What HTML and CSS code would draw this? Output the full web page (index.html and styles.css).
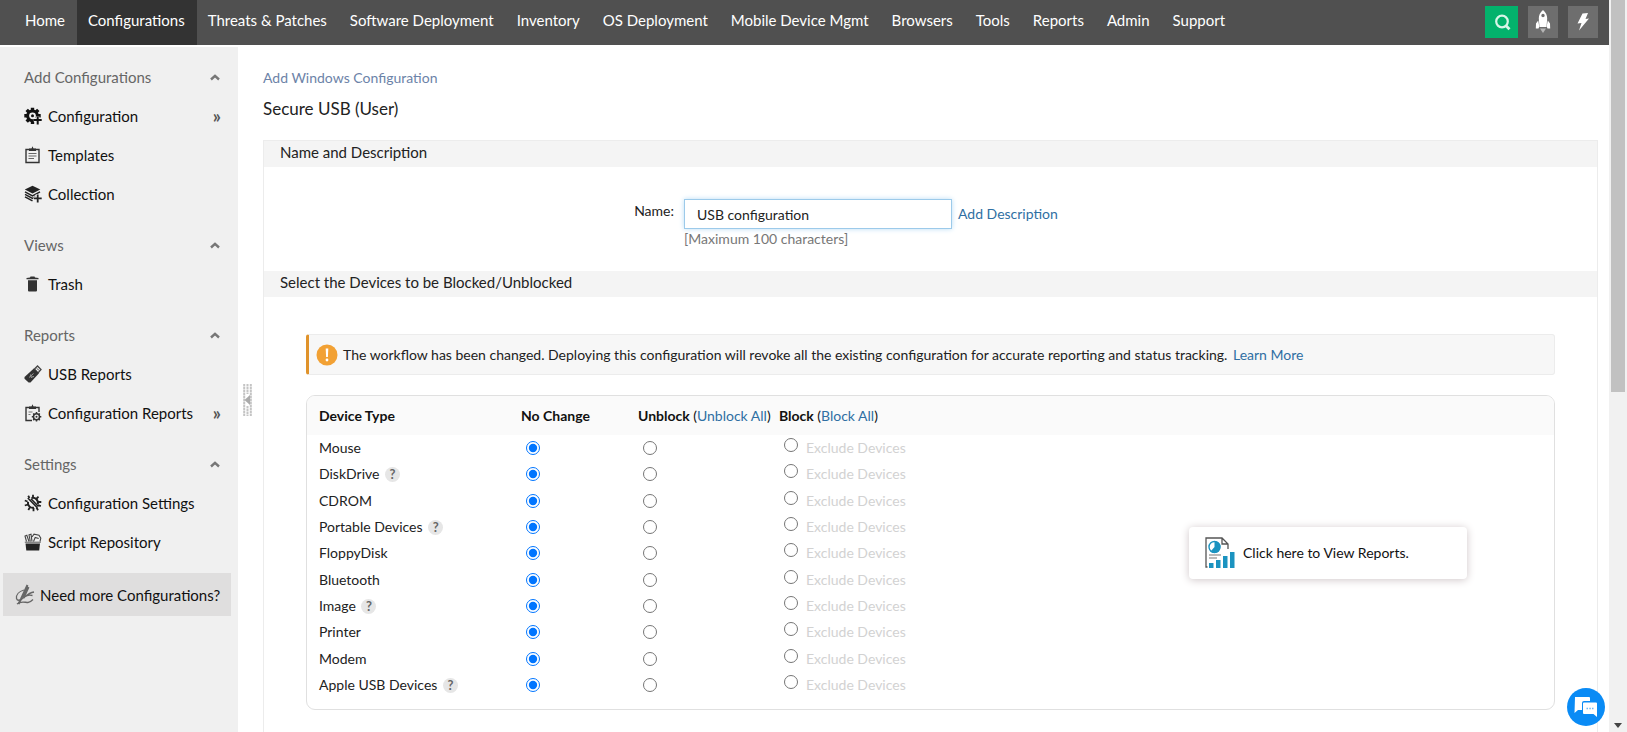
FILE: index.html
```html
<!DOCTYPE html>
<html lang="en">
<head>
    <meta charset="UTF-8">
    <meta name="viewport" content="width=device-width, initial-scale=1.0">
    <title>Secure USB (User)</title>
    <link rel="stylesheet" href="styles.css">
</head>

<body>
<div class="page">
    <header class="topbar">
        <nav class="main-nav">
            <a href="#">Home</a>
            <a href="#" class="active">Configurations</a>
            <a href="#">Threats &amp; Patches</a>
            <a href="#">Software Deployment</a>
            <a href="#">Inventory</a>
            <a href="#">OS Deployment</a>
            <a href="#">Mobile Device Mgmt</a>
            <a href="#">Browsers</a>
            <a href="#">Tools</a>
            <a href="#">Reports</a>
            <a href="#">Admin</a>
            <a href="#">Support</a>
        </nav>
        <div class="tools">
            <button class="tool tool-search" aria-label="Search">
                <svg width="18" height="18" viewBox="0 0 18 18"><circle cx="9" cy="8.500" r="5.800" fill="none" stroke="#d9f5e8" stroke-width="2.200"/><path d="M12.800 12.500l3.700 3.700" stroke="#d9f5e8" stroke-width="2.800"/></svg>
            </button>
            <button class="tool" aria-label="Quick launch">
                <svg width="16" height="24" viewBox="0 0 16 24" fill="#fff"><path fill-rule="evenodd" d="M8 0c3 2.400 4.200 5.500 4.200 8.500L11.500 17h-7L3.800 8.500C3.800 5.500 5 2.400 8 0zM8 3.800a1.700 1.700 0 1 0 0 3.400 1.700 1.700 0 0 0 0-3.400z"/><path d="M3.200 10.500L1 13.500.8 18.500h2.700l.8-2zM12.800 10.500l2.200 3 .2 5h-2.700l-.8-2z"/><path d="M5 18.500h6l-1.300 2L8 23l-1.700-2.500z" fill="#b5b5b5"/></svg>
            </button>
            <button class="tool" aria-label="Quick actions">
                <svg width="14" height="20" viewBox="0 0 14 20"><path d="M6.500 1.500l5.500-.5-2.500 6 3.500-.5L3 18.500l2.500-7.500-4 .5z" fill="#fff"/></svg>
            </button>
        </div>
    </header>

    <div class="body">
        <aside class="sidebar">
            <section class="menu-group">
                <h2>Add Configurations <svg class="caret" width="12" height="8" viewBox="0 0 12 8"><path d="M2 6.500L6 2.800l4 3.700"/></svg></h2>
                <a href="#">
                    <svg width="18" height="18" viewBox="0 0 18 18"><circle cx="8.500" cy="8.800" r="4.900" fill="none" stroke="#111" stroke-width="3"/><g stroke="#111" stroke-width="3.400"><path d="M8.500 3.500V.8M4.800 5L2.700 2.900M3.500 8.800H.3M4.800 12.500l-2.100 2.100M8.500 14v3M12.200 5l2.100-2.100M13.500 8.800h3.200"/></g><circle cx="8.500" cy="8.800" r="1.500" fill="#111"/><path d="M9.800 13h8M13.500 9.500v8.500" stroke="#f0f0f0" stroke-width="3.800"/><path d="M10 13h7.700M13.700 9.500v8" stroke="#111" stroke-width="2"/></svg>
                    <span>Configuration</span>
                    <i class="more">»</i>
                </a>
                <a href="#">
                    <svg width="18" height="18" viewBox="0 0 18 18"><path d="M2 3.500h13v13H2z" fill="none" stroke="#333" stroke-width="1.400"/><path d="M5 2.500h2.500L8.500.3l1 2.200H12V5H5z" fill="#333"/><path d="M4.500 7.500h8M4.500 10h8M4.500 12.500h5.500" stroke="#666" stroke-width="1"/></svg>
                    <span>Templates</span>
                </a>
                <a href="#">
                    <svg width="18" height="18" viewBox="0 0 18 18"><path d="M8.500.8l7.800 3.800-7.800 4L.8 4.600z" fill="#222"/><path d="M1 6.800l7.500 4L16 6.800M1 9.300l7.500 4 3-1.600M1 11.800l7.500 4" fill="none" stroke="#222" stroke-width="1.500"/><path d="M9.500 13.300h8M13.500 9.300v8" stroke="#f0f0f0" stroke-width="3.600"/><path d="M10 13.300h7.700M13.700 9.600v8" stroke="#222" stroke-width="1.800"/></svg>
                    <span>Collection</span>
                </a>
            </section>

            <section class="menu-group">
                <h2>Views <svg class="caret" width="12" height="8" viewBox="0 0 12 8"><path d="M2 6.500L6 2.800l4 3.700"/></svg></h2>
                <a href="#">
                    <svg width="18" height="18" viewBox="0 0 18 18" fill="#333"><path d="M4 5.200h9v10.300a1 1 0 0 1-1 1H5a1 1 0 0 1-1-1zM2.500 3L6 2.500l.5-1h4l.5 1 3.500.5v1.200h-12z"/></svg>
                    <span>Trash</span>
                </a>
            </section>

            <section class="menu-group">
                <h2>Reports <svg class="caret" width="12" height="8" viewBox="0 0 12 8"><path d="M2 6.500L6 2.800l4 3.700"/></svg></h2>
                <a href="#">
                    <svg width="18" height="18" viewBox="0 0 18 18"><path d="M10.500 4l3-3L17 4.500l-3 3.500z" fill="#f0f0f0" stroke="#444" stroke-width="1.300"/><path d="M12.800 3.300l2.200 2.200" stroke="#444"/><path d="M.5 12L9.800 3.500l5 5L6.500 17.500H4.600L.5 13.700z" fill="#333"/><path d="M5 12.500l4.500-4M6.500 9.500l1 3.500M8 12l2-.5" fill="none" stroke="#aaa" stroke-width=".9"/></svg>
                    <span>USB Reports</span>
                </a>
                <a href="#">
                    <svg width="18" height="18" viewBox="0 0 18 18"><path d="M8 16.500H2v-13h13V8" fill="none" stroke="#333" stroke-width="1.400"/><path d="M5 2.500h2.500L8.500.3l1 2.200H12V5H5z" fill="#333"/><path d="M4.500 8h4M4.500 10.500h2" stroke="#777"/><circle cx="12.500" cy="12.800" r="3" fill="none" stroke="#333" stroke-width="1.500"/><circle cx="12.500" cy="12.800" r="1" fill="#333"/><path d="M12.500 8v1.800M12.500 15.800v1.800M7.800 12.800h1.700M15.500 12.800h1.800M9.200 9.500l1.200 1.200M14.600 14.900l1.200 1.200M15.800 9.500l-1.200 1.200M9.200 16.100l1.200-1.200" stroke="#333" stroke-width="1.500"/></svg>
                    <span>Configuration Reports</span>
                    <i class="more">»</i>
                </a>
            </section>

            <section class="menu-group">
                <h2>Settings <svg class="caret" width="12" height="8" viewBox="0 0 12 8"><path d="M2 6.500L6 2.800l4 3.700"/></svg></h2>
                <a href="#">
                    <svg width="18" height="18" viewBox="0 0 18 18"><g fill="none" stroke="#222"><path d="M7.500 4a5 5 0 0 1 6.300 6M10 13.700a5 5 0 0 1-6-6" stroke-width="2"/><path d="M9 4V.8M12.200 5l2.300-2.300M14 8h3.300M14 11l2.800 1.200M5.500 4L4.200 1.800M3.500 7.500L.8 6.500M4 10.500l-3.200 1M6 13.300l-1.700 2.700M9.500 14v3.200M12.500 13.500l1.500 2.700" stroke-width="1.800"/><path d="M3.800 4l9.500 9.700M7 4.800l7.500 7.700" stroke-width="1.500"/></g></svg>
                    <span>Configuration Settings</span>
                </a>
                <a href="#">
                    <svg width="18" height="18" viewBox="0 0 18 18"><path d="M1.500 10.500h14.500l-.8 7H2.300z" fill="#222"/><path d="M.8 9.200h16" stroke="#555"/><path d="M2.500 8.500L1 3l1.800-.8L5 8.500M6.300 8.500L5 1.800l2-.5 1 7M8 4L10 1.200l5 1 1.800 3-.8 3.300M9.500 8.500l1.700-4 3.500 1" fill="none" stroke="#444" stroke-width="1.100"/></svg>
                    <span>Script Repository</span>
                </a>
            </section>

            <a href="#" class="need-more">
                <svg width="20" height="22" viewBox="0 0 20 22" fill="none" stroke="#666"><path d="M12.500 1L6 15l-2.500 5M13.500 3L8.500 14" stroke-width="2"/><path d="M9 6C4 7.500 1 11 1.500 14.500c1 3 4 2 8-1.500 3-2.500 6-4.500 9.500-5M9.500 13c2-1.500 6-2 8-1.500M2 20c4-3.500 8-1.500 11-1.500 2 0 3.500-1.500 5-3" stroke-width="1.300"/></svg>
                <span>Need more Configurations?</span>
            </a>
        </aside>

        <div class="splitter">
            <button class="splitter-handle" aria-label="Collapse menu">
                <svg width="9" height="32" viewBox="0 0 9 32"><path d="M1.200 0v32M4.500 0v10M4.500 22v10M7.800 0v32" stroke="#c4c4c4" stroke-width="2" stroke-dasharray="2.500 .5"/><path d="M7 11v10L1.500 16z" fill="#aaa"/></svg>
            </button>
        </div>

        <main class="content">
            <a href="#" class="breadcrumb">Add Windows Configuration</a>
            <h1>Secure USB (User)</h1>

            <form class="panel">
                <h3>Name and Description</h3>
                <div class="name-row">
                    <label for="config-name">Name:</label>
                    <div class="name-field">
                        <div class="name-input">
                            <input type="text" id="config-name" value="USB configuration" maxlength="100">
                            <a href="#">Add Description</a>
                        </div>
                        <div class="hint">[Maximum 100 characters]</div>
                    </div>
                </div>

                <h3>Select the Devices to be Blocked/Unblocked</h3>
                <div class="devices">
                    <div class="alert">
                        <svg width="22" height="22" viewBox="0 0 22 22"><circle cx="11" cy="11" r="10.500" fill="#f2a134"/><path d="M9.700 4.500h2.600l-.4 8.500h-1.800z" fill="#fff"/><circle cx="11" cy="16" r="1.400" fill="#fff"/></svg>
                        <p>The workflow has been changed. Deploying this configuration will revoke all the existing configuration for accurate reporting and status tracking. <a href="#">Learn More</a></p>
                    </div>

                    <div class="device-box">
                        <table>
                            <thead>
                                <tr>
                                    <th class="col-type">Device Type</th>
                                    <th class="col-none">No Change</th>
                                    <th class="col-unblock">Unblock <span>(<a href="#">Unblock All</a>)</span></th>
                                    <th class="col-block">Block <span>(<a href="#">Block All</a>)</span></th>
                                    <th></th>
                                </tr>
                            </thead>
                            <tbody>
                                <tr>
                                    <td>Mouse</td>
                                    <td><input type="radio" name="mouse" aria-label="Mouse: no change" checked></td>
                                    <td><input type="radio" name="mouse" aria-label="Mouse: unblock"></td>
                                    <td><div class="block-cell"><input type="radio" name="mouse" aria-label="Mouse: block"><span>Exclude Devices</span></div></td>
                                    <td class="reports-cell" rowspan="10">
                                        <a href="#" class="reports-card">
                                            <svg width="30" height="32" viewBox="0 0 30 32"><path d="M2.500 30H1V1h16l6 6v5M17 1v6h6" fill="none" stroke="#555" stroke-width="1.300"/><circle cx="9.500" cy="10" r="5.500" fill="none" stroke="#1b93c0" stroke-width="1.400"/><path d="M9.500 4a6 6 0 1 1-4 10.500l4-4.500z" fill="#1b93c0"/><path d="M4 18h12M4 21h8" stroke="#777" stroke-width="1.200"/><path d="M4 26h4.500v5H4zM11 23h4.500v8H11zM18 19h4.500v12H18zM25 15h4.500v16H25z" fill="#1b93c0"/></svg>
                                            <span>Click here to View Reports.</span>
                                        </a>
                                    </td>
                                </tr>
                                <tr>
                                    <td>DiskDrive <b class="help">?</b></td>
                                    <td><input type="radio" name="diskdrive" aria-label="DiskDrive: no change" checked></td>
                                    <td><input type="radio" name="diskdrive" aria-label="DiskDrive: unblock"></td>
                                    <td><div class="block-cell"><input type="radio" name="diskdrive" aria-label="DiskDrive: block"><span>Exclude Devices</span></div></td>
                                </tr>
                                <tr>
                                    <td>CDROM</td>
                                    <td><input type="radio" name="cdrom" aria-label="CDROM: no change" checked></td>
                                    <td><input type="radio" name="cdrom" aria-label="CDROM: unblock"></td>
                                    <td><div class="block-cell"><input type="radio" name="cdrom" aria-label="CDROM: block"><span>Exclude Devices</span></div></td>
                                </tr>
                                <tr>
                                    <td>Portable Devices <b class="help">?</b></td>
                                    <td><input type="radio" name="portable" aria-label="Portable Devices: no change" checked></td>
                                    <td><input type="radio" name="portable" aria-label="Portable Devices: unblock"></td>
                                    <td><div class="block-cell"><input type="radio" name="portable" aria-label="Portable Devices: block"><span>Exclude Devices</span></div></td>
                                </tr>
                                <tr>
                                    <td>FloppyDisk</td>
                                    <td><input type="radio" name="floppy" aria-label="FloppyDisk: no change" checked></td>
                                    <td><input type="radio" name="floppy" aria-label="FloppyDisk: unblock"></td>
                                    <td><div class="block-cell"><input type="radio" name="floppy" aria-label="FloppyDisk: block"><span>Exclude Devices</span></div></td>
                                </tr>
                                <tr>
                                    <td>Bluetooth</td>
                                    <td><input type="radio" name="bluetooth" aria-label="Bluetooth: no change" checked></td>
                                    <td><input type="radio" name="bluetooth" aria-label="Bluetooth: unblock"></td>
                                    <td><div class="block-cell"><input type="radio" name="bluetooth" aria-label="Bluetooth: block"><span>Exclude Devices</span></div></td>
                                </tr>
                                <tr>
                                    <td>Image <b class="help">?</b></td>
                                    <td><input type="radio" name="image" aria-label="Image: no change" checked></td>
                                    <td><input type="radio" name="image" aria-label="Image: unblock"></td>
                                    <td><div class="block-cell"><input type="radio" name="image" aria-label="Image: block"><span>Exclude Devices</span></div></td>
                                </tr>
                                <tr>
                                    <td>Printer</td>
                                    <td><input type="radio" name="printer" aria-label="Printer: no change" checked></td>
                                    <td><input type="radio" name="printer" aria-label="Printer: unblock"></td>
                                    <td><div class="block-cell"><input type="radio" name="printer" aria-label="Printer: block"><span>Exclude Devices</span></div></td>
                                </tr>
                                <tr>
                                    <td>Modem</td>
                                    <td><input type="radio" name="modem" aria-label="Modem: no change" checked></td>
                                    <td><input type="radio" name="modem" aria-label="Modem: unblock"></td>
                                    <td><div class="block-cell"><input type="radio" name="modem" aria-label="Modem: block"><span>Exclude Devices</span></div></td>
                                </tr>
                                <tr>
                                    <td>Apple USB Devices <b class="help">?</b></td>
                                    <td><input type="radio" name="apple" aria-label="Apple USB Devices: no change" checked></td>
                                    <td><input type="radio" name="apple" aria-label="Apple USB Devices: unblock"></td>
                                    <td><div class="block-cell"><input type="radio" name="apple" aria-label="Apple USB Devices: block"><span>Exclude Devices</span></div></td>
                                </tr>
                            </tbody>
                        </table>
                    </div>
                </div>
            </form>
        </main>
    </div>

    <button class="chat" aria-label="Chat">
        <svg width="24" height="22" viewBox="0 0 24 22"><path d="M1 1h14a1 1 0 0 1 1 1v3H10a2 2 0 0 0-2 2v7H4l-3.500 3z" fill="#fff"/><path d="M10 6.500h12a1 1 0 0 1 1 1V21l-3.500-3H10a1 1 0 0 1-1-1V7.500a1 1 0 0 1 1-1z" fill="#fff"/><path d="M12.500 12.500H14M15.300 12.500h1.500M18 12.500h1.500" stroke="#6bb8f8" stroke-width="1.500"/></svg>
    </button>
</div>

<div class="scrollbar">
    <div class="thumb"></div>
    <svg width="8" height="5" viewBox="0 0 8 5"><path d="M0 0h8L4 5z" fill="#444"/></svg>
</div>
</body>
</html>
```
FILE: styles.css
```css
* {
    box-sizing: border-box;
}

body {
    display: flex;
    height: 100vh;
    margin: 0;
    overflow: hidden;
    font-family: Lato, sans-serif;
    font-size: 14px;
    line-height: 20px;
    color: #222;
    background: #fff;
}

a {
    color: #2f6fa3;
    text-decoration: none;
}

button {
    border: 0;
    padding: 0;
    cursor: pointer;
}

.page {
    position: relative;
    display: flex;
    flex-direction: column;
    flex: 1;
    min-width: 0;
}

/* top bar */
.topbar {
    display: flex;
    justify-content: space-between;
    flex: none;
    height: 45px;
    padding: 0 11px 0 14px;
    background: #505050;
}

.main-nav {
    display: flex;
}

.main-nav a {
    padding: 10px 12px 15px 11px;
    font-size: 15px;
    white-space: nowrap;
    color: #fff;
}

.main-nav .active {
    background: #333;
}

.tools {
    display: flex;
    gap: 10px;
    padding-top: 6px;
}

.tool {
    display: flex;
    align-items: center;
    justify-content: center;
    width: 30px;
    height: 32px;
    background: #6e6e6e;
}

.tool-search {
    width: 33px;
    background: #03b26c;
}

.body {
    display: flex;
    flex: 1;
    min-height: 0;
}

/* left menu */
.sidebar {
    flex: none;
    width: 238px;
    margin-top: 2px;
    padding: 10px 7px 0 3px;
    background: #f0f0f0;
}

.menu-group {
    padding: 0 10px 12px 21px;
}

.menu-group h2,
.menu-group a {
    display: flex;
    align-items: center;
    height: 39px;
    margin: 0;
    font-size: 15px;
    font-weight: normal;
    color: #111;
}

.menu-group h2 {
    justify-content: space-between;
    color: #666;
}

.menu-group a {
    gap: 6px;
}

.caret {
    fill: none;
    stroke: #777;
    stroke-width: 2.4;
}

.more {
    margin-left: auto;
    font-size: 18px;
    font-style: normal;
    font-weight: bold;
    color: #555;
}

.need-more {
    display: flex;
    align-items: center;
    gap: 5px;
    height: 43px;
    padding-left: 12px;
    font-size: 15px;
    white-space: nowrap;
    color: #111;
    background: #dfdede;
}

.splitter {
    flex: none;
    width: 25px;
    padding: 339px 0 0 5px;
}

.splitter-handle {
    display: block;
    background: none;
}

.splitter-handle svg {
    display: block;
}

/* content */
.content {
    display: flex;
    flex-direction: column;
    flex: 1;
    min-width: 0;
    padding: 23px 11px 0 0;
}

.breadcrumb {
    color: #6c83a8;
}

h1 {
    margin: 10px 0 20px;
    font-size: 17px;
    font-weight: normal;
    line-height: 22px;
}

.panel {
    flex: 1;
    border: 1px solid #ececec;
    border-bottom: 0;
}

.panel h3 {
    height: 26px;
    margin: 0;
    padding-left: 16px;
    font-size: 15px;
    font-weight: normal;
    line-height: 23px;
    background: #f4f4f4;
}

.name-row {
    display: grid;
    grid-template-columns: 410px 1fr;
    gap: 10px;
    padding: 32px 0 22px;
}

.name-row label {
    padding-top: 2px;
    text-align: right;
}

.name-input {
    display: flex;
    align-items: center;
    gap: 6px;
}

.name-input input {
    width: 268px;
    height: 30px;
    padding: 0 12px;
    border: 1px solid #9ccaea;
    font: inherit;
    color: #222;
    box-shadow: 0 0 5px #b9ddf5;
}

.hint {
    color: #777;
}

.devices {
    padding: 37px 42px 0;
}

.alert {
    display: flex;
    align-items: center;
    gap: 5px;
    height: 41px;
    margin-bottom: 20px;
    padding-left: 7px;
    border: 1px solid #ececec;
    border-left: 3px solid #e0932b;
    border-radius: 3px;
    background: #f7f7f7;
}

.alert p {
    margin: 0;
}

.alert a {
    margin-left: 2px;
}

.device-box {
    padding-bottom: 11px;
    border: 1px solid #e0e0e0;
    border-radius: 9px;
    overflow: hidden;
}

table {
    width: 100%;
    height: 302px;
    border-collapse: collapse;
    table-layout: fixed;
}

th,
td {
    padding: 0;
    text-align: left;
}

th {
    height: 39px;
    background: #fafafa;
    color: #111;
}

th span {
    font-weight: normal;
}

th:first-child,
td:first-child {
    padding-left: 12px;
}

.col-type {
    width: 214px;
}

.col-none {
    width: 117px;
}

.col-unblock {
    width: 141px;
}

.col-block {
    width: 180px;
}

td input {
    display: block;
    width: 14px;
    height: 14px;
    margin: 0 0 0 5px;
}

.block-cell {
    display: flex;
    gap: 8px;
    color: #d2d2d2;
}

.help {
    display: inline-block;
    width: 15px;
    height: 15px;
    margin-left: 2px;
    border-radius: 50%;
    background: #e6e6e6;
    font-size: 13px;
    line-height: 15px;
    text-align: center;
    color: #666;
}

.reports-cell {
    padding: 92px 87px 0 0;
    vertical-align: top;
}

.reports-card {
    display: flex;
    align-items: center;
    gap: 8px;
    width: 278px;
    height: 52px;
    margin-left: auto;
    padding-left: 16px;
    border-radius: 4px;
    background: #fff;
    box-shadow: 0 1px 8px #cfc6c8;
    color: #111;
}

/* floating chat button */
.chat {
    position: absolute;
    right: 4px;
    bottom: 6px;
    display: flex;
    align-items: center;
    justify-content: center;
    width: 38px;
    height: 38px;
    border-radius: 50%;
    background: #0a8bf5;
}

/* scroll track */
.scrollbar {
    display: flex;
    flex-direction: column;
    align-items: center;
    justify-content: space-between;
    flex: none;
    width: 18px;
    padding-bottom: 4px;
    background: #f1f1f1;
}

.thumb {
    width: 14px;
    height: 392px;
    background: #c1c1c1;
}
```
